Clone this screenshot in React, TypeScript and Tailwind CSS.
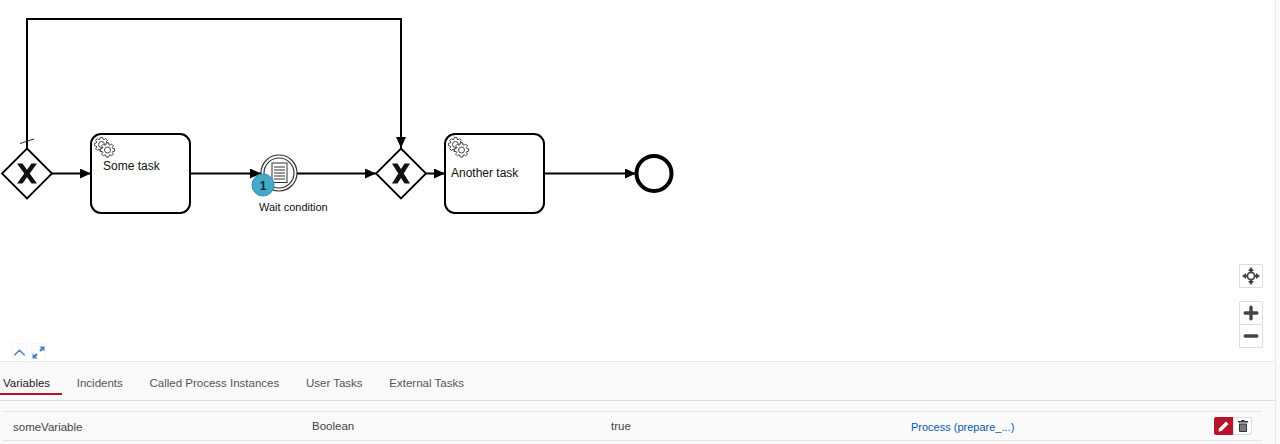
import type { ReactNode } from "react";
import { Plus, Minus, ChevronUp } from "lucide-react";

const tabs = ["Variables", "Incidents", "Called Process Instances", "User Tasks", "External Tasks"];

function gearPath(cx: number, cy: number, outer: number, inner: number) {
  const teeth = 8;
  const pts: string[] = [];
  for (let i = 0; i < teeth; i++) {
    const step = (Math.PI * 2) / teeth;
    const a = i * step;
    const offsets: [number, number][] = [
      [-0.32, inner],
      [-0.18, outer],
      [0.18, outer],
      [0.32, inner],
    ];
    for (const [o, r] of offsets) {
      const ang = a + o * step * 1.2;
      pts.push(`${(cx + Math.cos(ang) * r).toFixed(2)} ${(cy + Math.sin(ang) * r).toFixed(2)}`);
    }
  }
  return `M${pts.join(" L")} Z`;
}

function Flow({ d }: { d: string }) {
  return <path d={d} fill="none" stroke="#000" strokeWidth="2" markerEnd="url(#arrow)" />;
}

function Gateway({ cx, w }: { cx: number; w: number }) {
  const y = 173.5;
  const h = 10;
  const t = 5.5;
  // notches of the X, where the two diagonal strokes cross
  const notch = h * (1 - (2 * (w - t)) / (2 * w - t));
  const points = [
    [-w, -h], [-w + t, -h], [0, -notch], [w - t, -h], [w, -h], [t / 2, 0],
    [w, h], [w - t, h], [0, notch], [-w + t, h], [-w, h], [-t / 2, 0],
  ]
    .map(([px, py]) => `${cx + px},${y + py}`)
    .join(" ");
  return (
    <g>
      <path d={`M${cx} 148.5 L${cx + 25} 173.5 L${cx} 198.5 L${cx - 25} 173.5 Z`} fill="#fff" stroke="#000" strokeWidth="1.8" />
      <polygon points={points} fill="#111" />
    </g>
  );
}

function Gear({ x, y }: { x: number; y: number }) {
  return (
    <g stroke="#333" strokeWidth="0.9" fill="#fff">
      <path d={gearPath(x, y, 7.2, 5.4)} />
      <circle cx={x} cy={y} r={3} />
    </g>
  );
}

function Task({ x, label, labelX, labelY }: { x: number; label: string; labelX: number; labelY: number }) {
  return (
    <g>
      <rect x={x} y={134} width={99} height={79} rx={10} fill="#fff" stroke="#000" strokeWidth="2" />
      <Gear x={x + 10.5} y={144.5} />
      <Gear x={x + 16.5} y={150} />
      <text x={labelX} y={labelY} fontSize="12" fill="#111">{label}</text>
    </g>
  );
}

function Diagram() {
  return (
    <svg className="absolute left-0 top-0" width="1275" height="361" viewBox="0 0 1275 361">
      <defs>
        <marker id="arrow" markerWidth="12" markerHeight="12" refX="11" refY="5" orient="auto" markerUnits="userSpaceOnUse">
          <path d="M0 0 L11 5 L0 10 Z" fill="#000" />
        </marker>
      </defs>
      <path d="M27 148 L27 19 L401 19 L401 148" fill="none" stroke="#000" strokeWidth="2" markerEnd="url(#arrow)" />
      <path d="M20 143.5 L34 139" stroke="#222" strokeWidth="1" />
      <Gateway cx={27} w={10} />
      <Gateway cx={401} w={9} />
      <Flow d="M52 173.5 L91 173.5" />
      <Task x={91} label="Some task" labelX={103} labelY={170} />
      <Flow d="M190 173.5 L261 173.5" />
      <circle cx={279} cy={173} r={18} fill="#fff" stroke="#333" strokeWidth="1.2" />
      <circle cx={279} cy={173} r={15} fill="#fff" stroke="#333" strokeWidth="1.2" />
      <rect x={272} y={163} width={15} height={19.5} fill="#fff" stroke="#333" strokeWidth="1" />
      <path d="M274 167 H285 M274 170 H285 M274 173 H285 M274 176 H285 M274 179 H285" stroke="#333" strokeWidth="1" />
      <circle cx={263} cy={185} r={11} fill="#46a8c9" stroke="#3a90ae" strokeWidth="1" />
      <text x={263} y={189.5} fontSize="12" fontWeight="700" fill="#0d2a38" textAnchor="middle">1</text>
      <text x={259} y={211} fontSize="11" fill="#111">Wait condition</text>
      <Flow d="M297 173.5 L376 173.5" />
      <Flow d="M426 173.5 L445 173.5" />
      <Task x={445} label="Another task" labelX={451} labelY={177} />
      <Flow d="M544 173.5 L636 173.5" />
      <circle cx={654} cy={173.5} r={17.5} fill="#fff" stroke="#000" strokeWidth="4" />
    </svg>
  );
}

function MoveIcon() {
  return (
    <svg width="18" height="18" viewBox="0 0 18 18" fill="#444">
      <path d="M9 0 L12 4 H10 V6 H8 V4 H6 Z M9 18 L6 14 H8 V12 H10 V14 H12 Z M0 9 L4 6 V8 H6 V10 H4 V12 Z M18 9 L14 12 V10 H12 V8 H14 V6 Z" />
      <circle cx="9" cy="9" r="3.6" fill="none" stroke="#444" strokeWidth="1.8" />
    </svg>
  );
}

function MapButton({ className, children }: { className?: string; children: ReactNode }) {
  return (
    <div className={`flex h-6 w-6 items-center justify-center rounded-[1px] border border-[#ddd] bg-white ${className ?? ""}`}>
      {children}
    </div>
  );
}

export default function App() {
  return (
    <div className="flex h-[444px] w-[1280px] overflow-hidden bg-[#fafafa] font-['Liberation_Sans',Arial,sans-serif] text-[11.5px] text-[#444]">
      <div className="w-[1275px]">
        <div className="relative h-[362px] border-b border-[#e8e8e8] bg-white">
          <Diagram />
          <div className="absolute left-[1239px] top-[264px]">
            <MapButton><MoveIcon /></MapButton>
            <div className="mt-[13px]">
              <MapButton><Plus size={20} strokeWidth={4} color="#444" /></MapButton>
              <MapButton className="-mt-px"><Minus size={20} strokeWidth={4} color="#444" /></MapButton>
            </div>
          </div>
          <div className="absolute left-[12px] top-[343px] flex gap-[4px]">
            <div className="flex h-[18px] w-[15px] items-center justify-center border border-b-0 border-[#f4f6f9]">
              <ChevronUp size={19} strokeWidth={1.8} color="#5a8dbd" className="shrink-0" />
            </div>
            <div className="flex h-[18px] w-[15px] items-center justify-center border border-b-0 border-[#f4f6f9]">
              <svg width="13" height="13" viewBox="0 0 13 13" fill="#3f83c4">
                <path d="M12.5 .5 V5.5 L10.8 3.8 L8.8 5.8 L7.2 4.2 L9.2 2.2 L7.5 .5 Z M.5 12.5 V7.5 L2.2 9.2 L4.2 7.2 L5.8 8.8 L3.8 10.8 L5.5 12.5 Z" />
              </svg>
            </div>
          </div>
        </div>
        <div className="h-[82px]">
          <div className="flex h-[39px] gap-[26.7px] border-b border-[#ddd] pl-[3px] pt-[13px]">
            {tabs.map((t, i) => (
              <span key={t} className={i === 0 ? "relative h-[14px] text-[#222]" : "h-[14px] text-[#555]"}>
                {t}
                {i === 0 ? <span className="absolute -left-[3px] top-[18px] h-[2px] w-[62px] bg-[#b5152b]" /> : null}
              </span>
            ))}
          </div>
          <div className="ml-[3px] mr-[13px] mt-[10px] grid h-[30px] grid-cols-[299px_299px_300px_1fr] items-center border-y border-[#e4e4e4] pl-[10px]">
            <span className="pt-[3px]">someVariable</span>
            <span className="pt-[1px]">Boolean</span>
            <span className="pt-[2px]">true</span>
            <div className="flex items-center justify-between">
              <span className="pt-[2px] text-[11px] text-[#0a5ba8]">Process (prepare_...)</span>
              <div className="mr-[10px] flex">
                <div className="flex h-[18px] w-[19px] items-center justify-center rounded-l-[2px] bg-[#b5152b]">
                  <svg width="11" height="11" viewBox="0 0 11 11" fill="#fff">
                    <path d="M8 .5 L10.5 3 L3.5 10 L.5 10.5 L1 7.5 Z" />
                  </svg>
                </div>
                <div className="flex h-[18px] w-[19px] items-center justify-center rounded-r-[2px] border border-[#ddd] bg-white">
                  <svg width="10" height="12" viewBox="0 0 10 12" fill="#333">
                    <path d="M3.5 0 H6.5 V1 H10 V2.5 H0 V1 H3.5 Z M1 3.5 H9 V11 Q9 12 8 12 H2 Q1 12 1 11 Z" />
                    <path d="M3 4.5 V11 M5 4.5 V11 M7 4.5 V11" stroke="#fff" strokeWidth="0.7" />
                  </svg>
                </div>
              </div>
            </div>
          </div>
        </div>
      </div>
      <div className="w-[5px] border-l border-[#e8e8e8]" />
    </div>
  );
}
